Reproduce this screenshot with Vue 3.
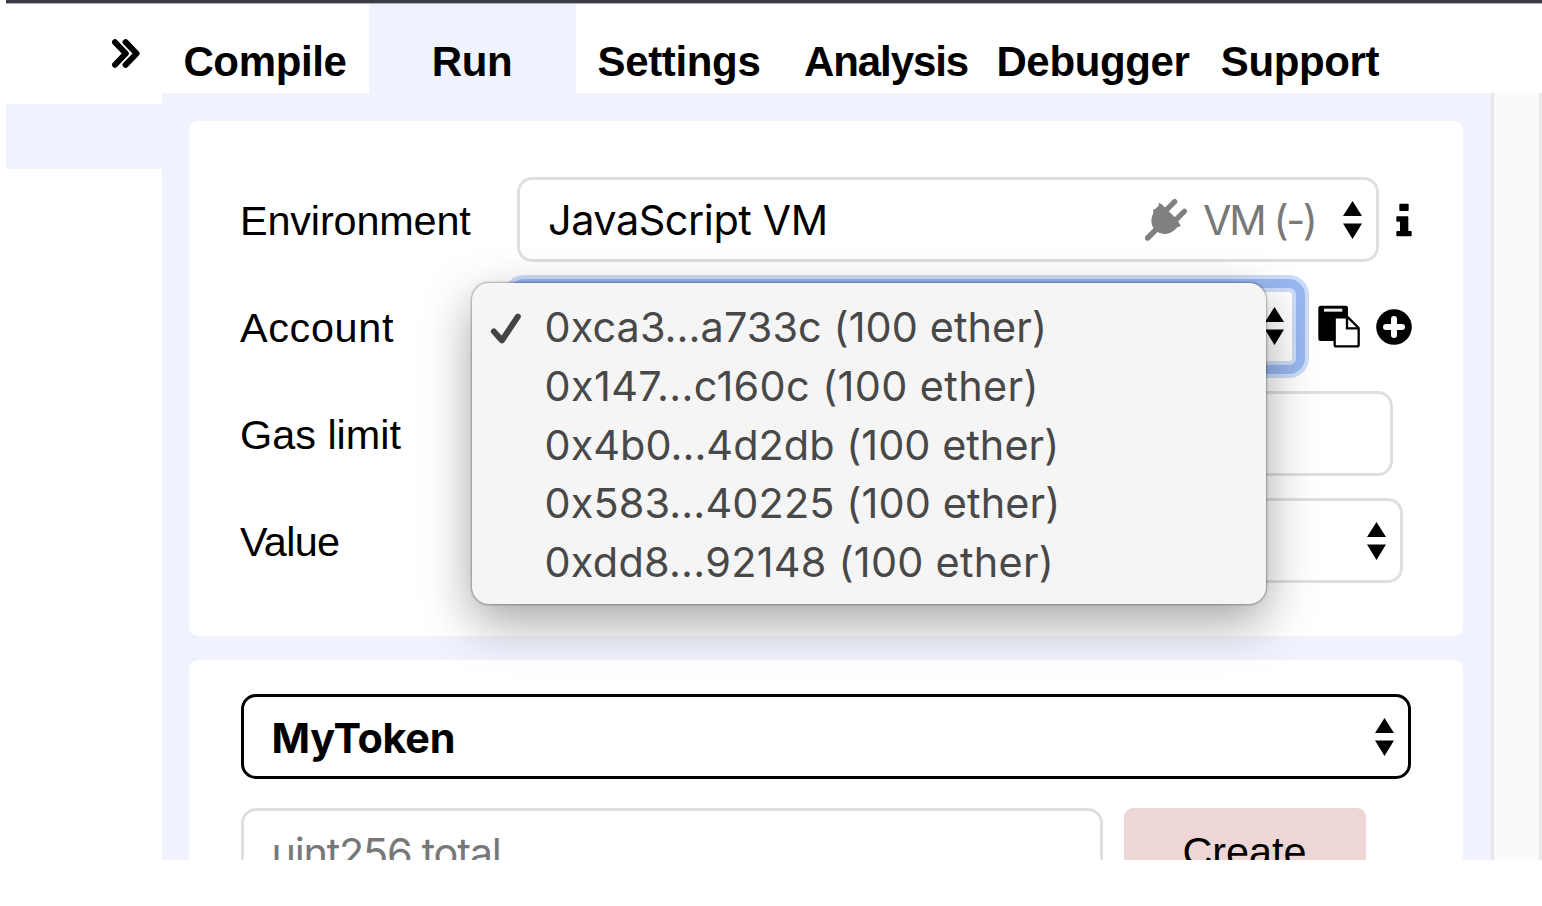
<script setup>
const tabs = ['Compile', 'Run', 'Settings', 'Analysis', 'Debugger', 'Support']
const accounts = [
  '0xca3...a733c (100 ether)',
  '0x147...c160c (100 ether)',
  '0x4b0...4d2db (100 ether)',
  '0x583...40225 (100 ether)',
  '0xdd8...92148 (100 ether)',
]
</script>

<template>
  <div class="window">
    <div class="topbar"></div>
    <div class="main">
      <aside class="side">
        <div class="toggle">
          <svg width="30" height="30" viewBox="0 0 30 30" fill="none" stroke="#000" stroke-width="6" stroke-linecap="round" stroke-linejoin="round">
            <path d="M4 3.2L14.8 14.5L4 25.8M14.6 3.2L25.6 14.5L14.6 25.8" />
          </svg>
        </div>
        <div class="band"></div>
      </aside>
      <section class="right">
        <nav class="tabs">
          <div v-for="t in tabs" :key="t" class="tab" :class="{ active: t === 'Run' }"><span :class="t.toLowerCase()">{{ t }}</span></div>
        </nav>
        <div class="content">
          <div class="panel">
            <div class="card settings-card">
              <div class="row">
                <label class="environment">Environment</label>
                <div class="field env">
                  <span class="js">JavaScript VM</span>
                  <svg class="plug" width="42" height="42" viewBox="0 0 126 126" fill="#808080">
                    <path d="M42 11L50 16L97 62L107 80Q103 83 97 85Q80 106 58 105Q40 103 30 93Q19 82 19 64Q20 51 25 42L24 31Q29 33 33 28Q36 24 41 20Z" />
                    <path d="M89 8L54 43M118 37L83 72M8 117L35 90" stroke="#808080" stroke-width="16" stroke-linecap="round" />
                  </svg>
                  <span class="vm">VM (-)</span>
                  <svg class="arrows" width="19" height="38" viewBox="0 0 19 38"><path d="M0 15L9.5 0L19 15ZM0 22.5H19L9.5 38Z" /></svg>
                </div>
                <svg class="info" width="16" height="34" viewBox="0 0 48 102">
                  <path d="M13 2H36Q38 2 38 4V21Q38 24 35 24H13Q10 24 10 21V5Q10 2 13 2ZM3 40H34Q37 40 37 43V84H44Q47 84 47 87V97Q47 100 44 100H4Q1 100 1 97V87Q1 84 4 84H12V56H4Q1 56 1 53V43Q1 40 3 40Z" />
                </svg>
              </div>
              <div class="row">
                <label class="account">Account</label>
                <div class="field focus">
                  <svg class="arrows" width="19" height="38" viewBox="0 0 19 38"><path d="M0 15L9.5 0L19 15ZM0 22.5H19L9.5 38Z" /></svg>
                </div>
                <svg class="paste" width="42" height="43" viewBox="0 0 126 129">
                  <path d="M7 2H83Q90 2 90 9V108H7Q1 108 1 102V9Q1 2 7 2Z" />
                  <path d="M18 11H73V20H18Z" fill="#f0f0f0" />
                  <path d="M50 37H90L122 69V119Q122 124 117 124H55Q50 124 50 119Z" fill="#fff" stroke="#000" stroke-width="7" stroke-linejoin="round" />
                  <path d="M87 38V70H121" fill="none" stroke="#000" stroke-width="7" />
                </svg>
                <svg class="plus" width="36" height="36" viewBox="0 0 36 36">
                  <circle cx="18" cy="18" r="17.8" />
                  <path d="M18 10V26M10 18H26" stroke="#fff" stroke-width="6" stroke-linecap="round" />
                </svg>
                <div class="menu">
                  <div v-for="(a, i) in accounts" :key="a" class="item">
                    <svg v-if="i === 0" class="check" width="32" height="32" viewBox="0 0 32 32" fill="none" stroke="#454545" stroke-linecap="round" stroke-linejoin="round">
                      <path d="M3.9 18.5L12 27.4L27.8 3.6" stroke-width="6" />
                    </svg>
                    <span :class="'acc' + i">{{ a }}</span>
                  </div>
                </div>
              </div>
              <div class="row">
                <label class="gas">Gas limit</label>
                <div class="field gas-field"></div>
              </div>
              <div class="row">
                <label class="value">Value</label>
                <div class="field value-field">
                  <svg class="arrows" width="19" height="38" viewBox="0 0 19 38"><path d="M0 15L9.5 0L19 15ZM0 22.5H19L9.5 38Z" /></svg>
                </div>
              </div>
            </div>
            <div class="card contract-card">
              <div class="field contract">
                <span class="token">MyToken</span>
                <svg class="arrows" width="19" height="38" viewBox="0 0 19 38"><path d="M0 15L9.5 0L19 15ZM0 22.5H19L9.5 38Z" /></svg>
              </div>
              <div class="create-row">
                <div class="field param"><span class="uint">uint256 total</span></div>
                <div class="button"><span class="create">Create</span></div>
              </div>
            </div>
          </div>
          <div class="track"></div>
        </div>
      </section>
    </div>
  </div>
</template>

<style>
body { margin: 0; background: #fff; overflow: hidden; }
</style>
<style scoped>
* { box-sizing: border-box; }
svg { display: block; flex: none; }
.window { margin-left: 6px; height: 860px; overflow: hidden; display: flex; flex-direction: column; font: 41.4px/50px "Liberation Sans", Arial, sans-serif; color: #000; white-space: nowrap; }
.topbar { height: 3px; flex: none; background: #3a3d47; box-shadow: 0 1px 0 #b0b1b5; position: relative; }
.main { flex: 1; min-height: 0; display: flex; }
.side { width: 155.5px; flex: none; }
.toggle { height: 100.5px; padding: 36px 0 0 105px; }
.band { height: 65.5px; background: #f0f3fd; }
.right { flex: 1; display: flex; flex-direction: column; }
.tabs { height: 90px; flex: none; display: flex; }
.tab { width: 207px; display: flex; justify-content: center; padding-top: 34px; font-weight: 700; font-size: 42px; letter-spacing: -.35px; }
.analysis { letter-spacing: -1.1px; }
.active { background: #f0f3fd; }
.content { flex: 1; min-height: 0; display: flex; }
.panel { width: 1329px; flex: none; background: #f0f3fd; padding: 28px 28px 0 27.5px; display: flex; flex-direction: column; gap: 24px; }
.card { background: #fff; border-radius: 9px; flex: none; }
.settings-card { height: 514.5px; padding: 56px 0 0 51px; display: flex; flex-direction: column; gap: 22px; }
.row { height: 85px; flex: none; display: flex; align-items: center; position: relative; }
label { width: 277px; flex: none; padding-top: 2px; }
.environment { letter-spacing: -.15px; }
.account { letter-spacing: .65px; }
.value { letter-spacing: -.7px; }
.field { height: 85px; border: 3px solid #dfdfdf; border-radius: 15px; display: flex; align-items: center; flex: none; background: #fff; font-family: Inter, "Liberation Sans", sans-serif; padding: 0 14px 0 28px; }
.arrows { margin-left: auto; }
.env { width: 862px; }
.plug { margin-left: auto; }
.vm { color: #787878; margin-left: 16px; letter-spacing: -2.4px; }
.env .arrows { margin-left: 27.5px; }
.js { letter-spacing: -.45px; }
.info { margin-left: 16.5px; }
.focus { width: 797px; height: 95px; margin: 0 0 0 -9.5px; border: 9px solid #98b8f0; border-radius: 16px; box-shadow: 0 0 0 4px #cdddf8, inset 0 0 0 4px #cddcf7; padding: 0 12px 2px 0; }
.paste { margin-left: 13.5px; }
.plus { margin-left: 16px; }
.gas-field { width: 876px; }
.value-field { width: 886px; }
.menu { position: absolute; left: 231.5px; top: -1px; width: 794.5px; height: 321px; border-radius: 17px; background: #f5f5f5; padding-top: 15px; color: #484848; z-index: 2; box-shadow: 0 0 2px 1px rgba(0,0,0,.3), 0 18px 50px rgba(0,0,0,.36); font-family: Inter, "Liberation Sans", sans-serif; }
.item { height: 58.7px; display: flex; align-items: center; padding-left: 73px; position: relative; }
.check { position: absolute; left: 18px; top: 15px; }
.acc0 { letter-spacing: .08px; }
.acc1 { letter-spacing: .37px; }
.acc2 { letter-spacing: .03px; }
.acc3 { letter-spacing: .13px; }
.acc4 { letter-spacing: .26px; }
.contract-card { height: 300px; padding: 34.5px 0 0 51.5px; }
.contract { width: 1170px; border-color: #000; font-weight: 700; }
.token { letter-spacing: -.3px; padding-top: 3px; }
.create-row { margin-top: 29px; display: flex; gap: 21px; }
.param { width: 862px; color: #787878; }
.uint { padding-top: 4px; letter-spacing: -1.25px; }
.button { width: 242px; height: 85px; border-radius: 9px; background: #eed6d6; display: flex; justify-content: center; padding-top: 19px; }
.track { flex: 1; background: #fafafa; border-left: 3px solid #e7e7e7; border-right: 3px solid #ebebeb; }
</style>
